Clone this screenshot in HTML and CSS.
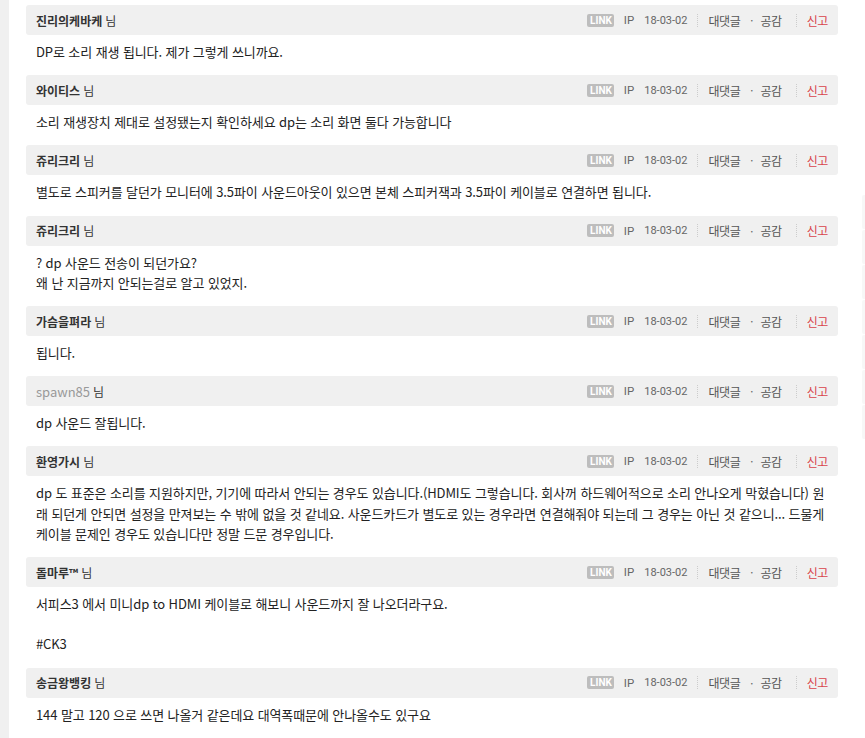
FILE: index.html
```html
<!DOCTYPE html>
<html lang="ko">
<head>
<meta charset="utf-8">
<title>댓글</title>
<link rel="stylesheet" href="styles.css">
</head>
<body>
<div class="page">
  <div class="strip"></div>
  <main class="comments">
    <div class="comment">
      <div class="head"><span class="name">진리의케바케</span><span class="nim">님</span>
        <div class="meta"><span class="link">LINK</span><span class="ip">IP</span><span class="date">18-03-02</span><span class="sep"></span><span class="act">대댓글</span><span class="dot">·</span><span class="act">공감</span><span class="sep sep-r"></span><span class="report">신고</span></div>
      </div>
      <div class="body">DP로 소리 재생 됩니다. 제가 그렇게 쓰니까요.</div>
    </div>
    <div class="comment">
      <div class="head"><span class="name">와이티스</span><span class="nim">님</span>
        <div class="meta"><span class="link">LINK</span><span class="ip">IP</span><span class="date">18-03-02</span><span class="sep"></span><span class="act">대댓글</span><span class="dot">·</span><span class="act">공감</span><span class="sep sep-r"></span><span class="report">신고</span></div>
      </div>
      <div class="body">소리 재생장치 제대로 설정됐는지 확인하세요 dp는 소리 화면 둘다 가능합니다</div>
    </div>
    <div class="comment">
      <div class="head"><span class="name">쥬리크리</span><span class="nim">님</span>
        <div class="meta"><span class="link">LINK</span><span class="ip">IP</span><span class="date">18-03-02</span><span class="sep"></span><span class="act">대댓글</span><span class="dot">·</span><span class="act">공감</span><span class="sep sep-r"></span><span class="report">신고</span></div>
      </div>
      <div class="body">별도로 스피커를 달던가 모니터에 3.5파이 사운드아웃이 있으면 본체 스피커잭과 3.5파이 케이블로 연결하면 됩니다.</div>
    </div>
    <div class="comment">
      <div class="head"><span class="name">쥬리크리</span><span class="nim">님</span>
        <div class="meta"><span class="link">LINK</span><span class="ip">IP</span><span class="date">18-03-02</span><span class="sep"></span><span class="act">대댓글</span><span class="dot">·</span><span class="act">공감</span><span class="sep sep-r"></span><span class="report">신고</span></div>
      </div>
      <div class="body">? dp 사운드 전송이 되던가요?<br>왜 난 지금까지 안되는걸로 알고 있었지.</div>
    </div>
    <div class="comment">
      <div class="head"><span class="name">가슴을펴라</span><span class="nim">님</span>
        <div class="meta"><span class="link">LINK</span><span class="ip">IP</span><span class="date">18-03-02</span><span class="sep"></span><span class="act">대댓글</span><span class="dot">·</span><span class="act">공감</span><span class="sep sep-r"></span><span class="report">신고</span></div>
      </div>
      <div class="body">됩니다.</div>
    </div>
    <div class="comment">
      <div class="head"><span class="name guest">spawn85</span><span class="nim">님</span>
        <div class="meta"><span class="link">LINK</span><span class="ip">IP</span><span class="date">18-03-02</span><span class="sep"></span><span class="act">대댓글</span><span class="dot">·</span><span class="act">공감</span><span class="sep sep-r"></span><span class="report">신고</span></div>
      </div>
      <div class="body">dp 사운드 잘됩니다.</div>
    </div>
    <div class="comment">
      <div class="head"><span class="name">환영가시</span><span class="nim">님</span>
        <div class="meta"><span class="link">LINK</span><span class="ip">IP</span><span class="date">18-03-02</span><span class="sep"></span><span class="act">대댓글</span><span class="dot">·</span><span class="act">공감</span><span class="sep sep-r"></span><span class="report">신고</span></div>
      </div>
      <div class="body">dp 도 표준은 소리를 지원하지만, 기기에 따라서 안되는 경우도 있습니다.(HDMI도 그렇습니다. 회사꺼 하드웨어적으로 소리 안나오게 막혔습니다) 원래 되던게 안되면 설정을 만져보는 수 밖에 없을 것 같네요. 사운드카드가 별도로 있는 경우라면 연결해줘야 되는데 그 경우는 아닌 것 같으니... 드물게 케이블 문제인 경우도 있습니다만 정말 드문 경우입니다.</div>
    </div>
    <div class="comment">
      <div class="head"><span class="name">돌마루™</span><span class="nim">님</span>
        <div class="meta"><span class="link">LINK</span><span class="ip">IP</span><span class="date">18-03-02</span><span class="sep"></span><span class="act">대댓글</span><span class="dot">·</span><span class="act">공감</span><span class="sep sep-r"></span><span class="report">신고</span></div>
      </div>
      <div class="body">서피스3 에서 미니dp to HDMI 케이블로 해보니 사운드까지 잘 나오더라구요.<br><br>#CK3</div>
    </div>
    <div class="comment">
      <div class="head"><span class="name">송금왕뱅킹</span><span class="nim">님</span>
        <div class="meta"><span class="link">LINK</span><span class="ip">IP</span><span class="date">18-03-02</span><span class="sep"></span><span class="act">대댓글</span><span class="dot">·</span><span class="act">공감</span><span class="sep sep-r"></span><span class="report">신고</span></div>
      </div>
      <div class="body">144 말고 120 으로 쓰면 나올거 같은데요 대역폭때문에 안나올수도 있구요</div>
    </div>
    <div class="comment">
      <div class="head"></div>
    </div>
  </main>
  <aside class="side">
    <div class="side-box"></div>
    <div class="side-box"></div>
    <div class="side-box"></div>
    <div class="side-box"></div>
    <div class="side-box"></div>
    <div class="side-box"></div>
    <div class="side-box"></div>
  </aside>
</div>
</body>
</html>
```
FILE: styles.css
```css
html, body {
  margin: 0;
  padding: 0;
  overflow: hidden;
  background: #fff;
}
body {
  font-family: "Noto Sans CJK KR", Roboto, sans-serif;
  color: #222;
  font-size: 13px;
}
.page {
  display: flex;
  align-items: flex-start;
  height: 738px;
}
.strip {
  width: 9px;
  flex: none;
  align-self: stretch;
  background: #f0f0f0;
}
.comments {
  width: 812px;
  flex: none;
  margin-left: 17px;
  padding-top: 5px;
}
.head {
  height: 30px;
  background: #f0f0f0;
  border-radius: 3px;
  display: flex;
  align-items: center;
  padding: 0 10px;
  font-size: 12px;
}
.name {
  font-weight: 700;
  color: #333;
}
.name.guest {
  color: #999;
  font-weight: 400;
  font-size: 13px;
}
.nim {
  margin-left: 3px;
  color: #333;
}
.meta {
  margin-left: auto;
  display: flex;
  align-items: center;
  color: #666;
  font-size: 11px;
}
.link {
  background: #bdbdbd;
  color: #fff;
  font-family: Roboto, sans-serif;
  font-weight: 700;
  font-size: 10px;
  line-height: 13px;
  padding: 0 2px 0 3px;
  border-radius: 2px;
}
.ip {
  font-family: Roboto, sans-serif;
  font-size: 11.5px;
  margin-left: 10px;
}
.date {
  font-family: Roboto, sans-serif;
  font-size: 11px;
  margin-left: 10px;
}
.sep {
  width: 0;
  height: 13px;
  border-left: 1px dotted #ccc;
  margin: 0 10px 0 10px;
}
.sep-r {
  margin: 0 10px 0 14px;
}
.act {
  color: #555;
  font-size: 12px;
  letter-spacing: -0.4px;
}
.dot {
  margin: 0 7px 0 10px;
  color: #666;
}
.report {
  color: #d9434b;
  font-size: 12px;
  letter-spacing: -0.4px;
}
.body {
  padding: 7px 10px 13px;
  line-height: 20.2px;
  color: #222;
  font-size: 13px;
  letter-spacing: -0.1px;
}
.side {
  margin-left: 24px;
  margin-top: 195px;
  width: 10px;
  flex: none;
  display: flex;
  flex-direction: column;
  gap: 1px;
}
.side-box {
  height: 34px;
  background: #f7f7f7;
  border-radius: 2px;
}
```
